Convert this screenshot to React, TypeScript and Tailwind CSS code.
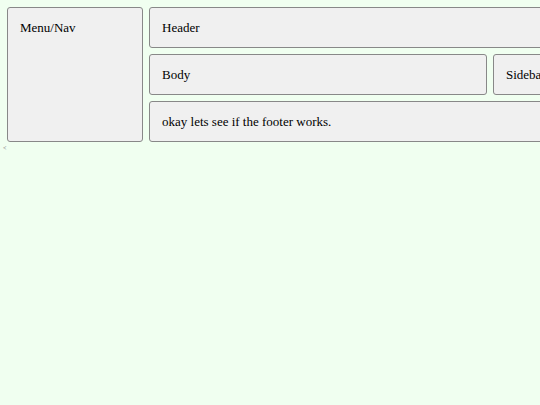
import React from "react";

const Box: React.FC<{ className?: string; children: React.ReactNode }> = ({
  className = "",
  children,
}) => (
  <div
    className={`bg-[#f0f0f0] border border-[#888888] rounded-[3px] px-[12px] py-[12px] text-[13px] leading-[15px] text-black whitespace-nowrap overflow-hidden ${className}`}
  >
    {children}
  </div>
);

const App: React.FC = () => {
  return (
    <div
      className="min-h-screen w-full bg-[#f0fff0] overflow-hidden"
      style={{ fontFamily: '"Liberation Serif", "Times New Roman", serif' }}
    >
      <div className="grid w-max grid-cols-[136px_338px_200px] grid-rows-[41px_41px_41px] gap-[6px] px-[7px] pt-[7px] pb-[3px]">
        <Box className="row-span-3">Menu/Nav</Box>
        <Box className="col-span-2">Header</Box>
        <Box>Body</Box>
        <Box>Sidebar</Box>
        <Box className="col-span-2">okay lets see if the footer works.</Box>
      </div>
      <div className="px-[3px] text-[6px] leading-[7px] text-[#777777]">&lt;</div>
    </div>
  );
};

export default App;
